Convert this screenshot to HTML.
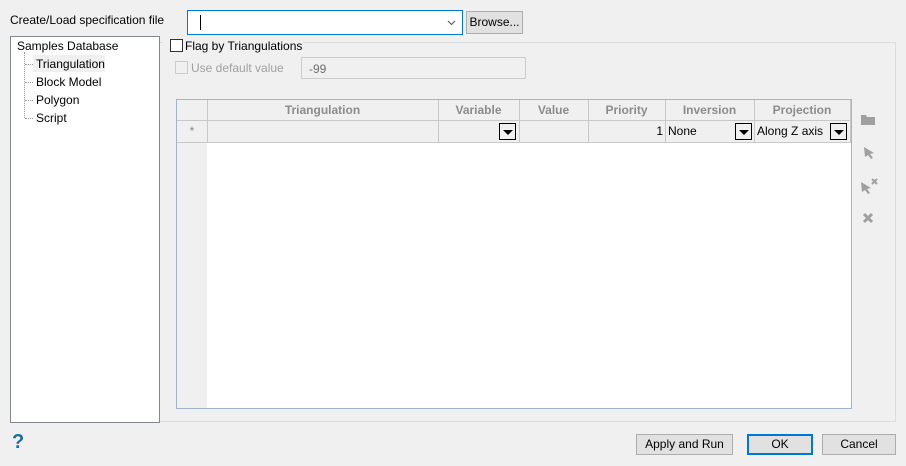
<!DOCTYPE html><html><head><style>
body{margin:0;width:906px;height:466px;background:#f0f0f0;font-family:"Liberation Sans",sans-serif;font-size:12px;color:#000;position:relative;overflow:hidden}
.a{position:absolute}
.btn{position:absolute;background:#e1e1e1;border:1px solid #adadad;box-sizing:border-box;text-align:center;line-height:19px}
.dd{position:absolute;width:17px;height:17px;border:1px solid #000;box-sizing:border-box;background:#f0f0f0}
.dd:after{content:"";position:absolute;left:3px;top:6px;border-left:5px solid transparent;border-right:5px solid transparent;border-top:5px solid #000}
.hd{position:absolute;top:0;height:20px;line-height:20px;text-align:center;color:#8c8c8c;font-weight:bold;border-right:1px solid #c8c8c8;box-sizing:border-box}
.cell{position:absolute;top:21px;height:21px;line-height:21px;border-right:1px solid #c8c8c8;box-sizing:border-box}
</style></head><body>
<div class="a" style="left:10px;top:13px">Create/Load specification file</div>
<div class="a" style="left:187px;top:10px;width:276px;height:25px;border:1px solid #0078d7;background:#fff;box-sizing:border-box"><div class="a" style="left:12px;top:4px;width:1px;height:15px;background:#000"></div><svg class="a" style="right:6px;top:9px" width="9" height="6"><path d="M1 1L4.5 4.5L8 1" stroke="#555" fill="none"/></svg></div>
<div class="btn" style="left:466px;top:11px;width:57px;height:23px;line-height:21px">Browse...</div>
<div class="a" style="left:10px;top:36px;width:150px;height:387px;background:#fff;border:1px solid #828790;box-sizing:border-box"></div>
<div class="a" style="left:17px;top:39px">Samples Database</div>
<div class="a" style="left:24px;top:52px;height:66px;border-left:1px dotted #999"></div>
<div class="a" style="left:25px;top:64px;width:8px;border-top:1px dotted #999"></div>
<div class="a" style="left:25px;top:82px;width:8px;border-top:1px dotted #999"></div>
<div class="a" style="left:25px;top:100px;width:8px;border-top:1px dotted #999"></div>
<div class="a" style="left:25px;top:118px;width:8px;border-top:1px dotted #999"></div>
<div class="a" style="left:33px;top:55px;width:72px;height:17px;background:#f0f0f0"></div>
<div class="a" style="left:36px;top:57px">Triangulation</div>
<div class="a" style="left:36px;top:75px">Block Model</div>
<div class="a" style="left:36px;top:93px">Polygon</div>
<div class="a" style="left:36px;top:111px">Script</div>
<div class="a" style="left:160px;top:42px;width:736px;height:380px;border:1px solid #dcdcdc;border-left:none;box-sizing:border-box"></div>
<div class="a" style="left:163px;top:37px;width:140px;height:16px;background:#f0f0f0"></div>
<div class="a" style="left:170px;top:39px;width:13px;height:13px;border:1px solid #333;background:#fff;box-sizing:border-box"></div>
<div class="a" style="left:185px;top:39px">Flag by Triangulations</div>
<div class="a" style="left:175px;top:61px;width:13px;height:13px;border:1px solid #ccc;box-sizing:border-box"></div>
<div class="a" style="left:191px;top:61px;color:#a0a0a0">Use default value</div>
<div class="a" style="left:301px;top:57px;width:225px;height:22px;border:1px solid #ccc;box-sizing:border-box;color:#6d6d6d;padding:4px 7px">-99</div>
<div class="a" style="left:176px;top:99px;width:676px;height:310px;border:1px solid #a0b4cc;background:#fff;box-sizing:border-box;overflow:hidden">
 <div class="a" style="left:0;top:0;width:30px;height:310px;background:#f0f0f0"></div>
 <div class="a" style="left:0;top:0;width:674px;height:42px;background:#f0f0f0;border-bottom:1px solid #c8c8c8"></div>
 <div class="a" style="left:0;top:20px;width:674px;border-top:1px solid #c8c8c8"></div>
 <div class="hd" style="left:0;width:31px"></div>
 <div class="hd" style="left:30px;width:232px">Triangulation</div>
 <div class="hd" style="left:261px;width:82px">Variable</div>
 <div class="hd" style="left:342px;width:70px">Value</div>
 <div class="hd" style="left:411px;width:78px">Priority</div>
 <div class="hd" style="left:488px;width:90px">Inversion</div>
 <div class="hd" style="left:577px;width:97px">Projection</div>
 <div class="cell" style="left:0;width:31px;color:#888;text-align:center">*</div>
 <div class="cell" style="left:30px;width:232px"></div>
 <div class="cell" style="left:261px;width:82px"><div class="dd" style="left:61px;top:2px"></div></div>
 <div class="cell" style="left:342px;width:70px"></div>
 <div class="cell" style="left:411px;width:78px;text-align:right;padding-right:2px">1</div>
 <div class="cell" style="left:488px;width:90px;padding-left:3px">None<div class="dd" style="left:70px;top:2px"></div></div>
 <div class="cell" style="left:577px;width:97px;padding-left:3px">Along Z axis<div class="dd" style="left:76px;top:2px"></div></div>
</div>
<svg class="a" style="left:860px;top:112px" width="16" height="14"><path d="M1 3h5l1 2h8v8H1z" fill="#a0a0a0"/></svg>
<svg class="a" style="left:863px;top:146px" width="12" height="14"><path d="M1 1L11 7L7 8L10 12L8 13L5 9L2 11z" fill="#a0a0a0"/></svg>
<svg class="a" style="left:860px;top:178px" width="18" height="16"><path d="M1 4L11 10L7 11L10 15L8 16L5 12L2 14z" fill="#a0a0a0"/><path d="M12 1l5 5M17 1l-5 5" stroke="#a0a0a0" stroke-width="2"/></svg>
<svg class="a" style="left:862px;top:212px" width="12" height="12"><path d="M2 2l8 8M10 2l-8 8" stroke="#a0a0a0" stroke-width="3"/></svg>
<div class="a" style="left:12px;top:431px;color:#1a6fa0;font-size:20px;font-weight:bold">?</div>
<div class="btn" style="left:636px;top:434px;width:97px;height:21px">Apply and Run</div>
<div class="btn" style="left:747px;top:434px;width:66px;height:21px;border:2px solid #0078d7;line-height:17px">OK</div>
<div class="btn" style="left:822px;top:434px;width:74px;height:21px">Cancel</div>
</body></html>
